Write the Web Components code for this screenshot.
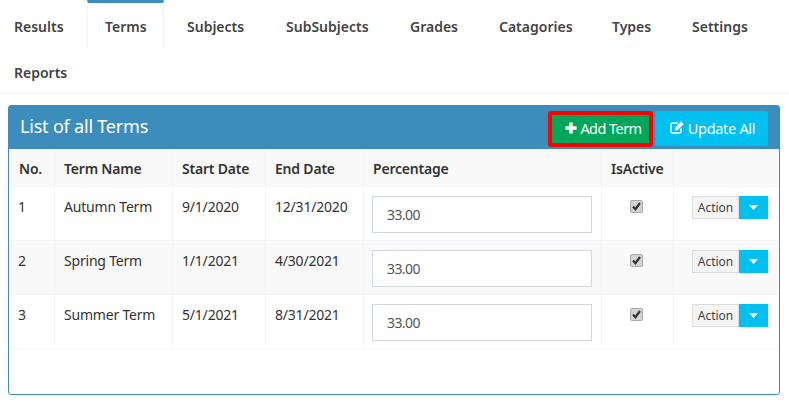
<!DOCTYPE html>
<html>
<head>
<meta charset="utf-8">
<style>
  body { margin: 0; background: #fff; font-family: "Noto Sans", "Liberation Sans", sans-serif; color: #333; overflow: hidden; }
</style>
</head>
<body>
<nav-tabs>
  <nav-tab w="87">Results</nav-tab>
  <nav-tab w="77" active>Terms</nav-tab>
  <nav-tab w="99">Subjects</nav-tab>
  <nav-tab w="124">SubSubjects</nav-tab>
  <nav-tab w="89">Grades</nav-tab>
  <nav-tab w="113">Catagories</nav-tab>
  <nav-tab w="80">Types</nav-tab>
  <nav-tab w="97">Settings</nav-tab>
  <nav-tab w="87">Reports</nav-tab>
</nav-tabs>
<terms-panel title="List of all Terms">
  <term-row name="1" term="Autumn Term" start="9/1/2020" end="12/31/2020"></term-row>
  <term-row name="2" term="Spring Term" start="1/1/2021" end="4/30/2021" striped></term-row>
  <term-row name="3" term="Summer Term" start="5/1/2021" end="8/31/2021"></term-row>
</terms-panel>
<script>
const COLS = '46px 118px 93px 98px 238px 72px 1fr';

class NavTabs extends HTMLElement {
  constructor() {
    super();
    this.attachShadow({ mode: 'open' }).innerHTML = `
      <style>
        :host { display: flex; flex-wrap: wrap; height: 93px; border-bottom: 1px solid #f4f4f4; align-content: flex-start; }
      </style>
      <slot></slot>`;
  }
}
customElements.define('nav-tabs', NavTabs);

class NavTab extends HTMLElement {
  constructor() {
    super();
    const active = this.hasAttribute('active');
    this.attachShadow({ mode: 'open' }).innerHTML = `
      <style>
        :host { display: block; box-sizing: border-box; height: 46px; font-size: 14px; font-weight: 600; color: #444;
          padding: 17px 0 0 ${active ? 17 : 14}px; line-height: 20px; white-space: nowrap; }
        :host([active]) { height: 48px; margin: 0 9px -2px 0; border-top: 3px solid #3c8dbc; border-left: 1px solid #f4f4f4; border-right: 1px solid #f4f4f4; padding-top: 14px; }
      </style>
      <slot></slot>`;
    this.style.width = this.getAttribute('w') + 'px';
  }
}
customElements.define('nav-tab', NavTab);

class ToolButton extends HTMLElement {
  constructor() {
    super();
    this.attachShadow({ mode: 'open' }).innerHTML = `
      <style>
        :host { display: flex; align-items: center; justify-content: center; gap: 3px; box-sizing: border-box; height: 35px; padding: 0 0 2px var(--pl);
          background: var(--bg); color: #fff; font-size: 14.5px; border-radius: 3px; letter-spacing: var(--ls); }
        svg { display: block; }
      </style>
      <slot name="icon"></slot><slot></slot>`;
  }
}
customElements.define('tool-button', ToolButton);

class TermsPanel extends HTMLElement {
  constructor() {
    super();
    this.attachShadow({ mode: 'open' }).innerHTML = `
      <style>
        :host { display: block; box-sizing: border-box; margin: 11px 9px 0 8px; height: 290px; border: 1px solid #3c8dbc; border-radius: 3px; }
        header { display: flex; align-items: flex-start; height: 43px; background: #3c8dbc; padding: 5px 11px 0 11px; box-sizing: border-box; }
        h3 { flex: 1; margin: 0; padding-top: 3px; font-size: 18px; font-weight: 400; color: #fff; line-height: 24px; letter-spacing: -0.2px; }
        .tools { display: flex; gap: 2px; }
        .add { width: 105px; height: 36px; border: 4px solid #f00; box-sizing: border-box; border-radius: 3px; display: flex; }
        .add tool-button { flex: 1; height: auto; --bg: #00a65a; --ls: -0.55px; --pl: 6px; border-radius: 0; }
        .upd { width: 113px; --bg: #00c0ef; --ls: -0.3px; --pl: 2px; }
        .head { display: grid; grid-template-columns: ${COLS}; height: 38px; background: #f9f9f9; font-size: 14px; font-weight: 600; color: #333; letter-spacing: -0.2px; border-bottom: 1px solid #f4f4f4; box-sizing: border-box; }
        .head div { padding: 1px 0 0 9px; line-height: 38px; height: 37px; box-sizing: border-box; border-right: 1px solid #f4f4f4; white-space: nowrap; }
        .head div:first-child { padding-left: 10px; }
        .head div:last-child { border-right: 0; }
      </style>
      <header>
        <h3>${this.getAttribute('title')}</h3>
        <div class="tools">
          <div class="add"><tool-button>
            <svg slot="icon" width="12" height="12" viewBox="0 0 12 12"><path d="M4.2 0.4h3.6v3.8h3.8v3.6H7.8v3.8H4.2V7.8H0.4V4.2h3.8z" fill="#fff"/></svg>
            Add Term</tool-button></div>
          <tool-button class="upd">
            <svg slot="icon" width="15" height="13" viewBox="0 0 15 13"><path d="M11 7.5v3A1.6 1.6 0 0 1 9.4 12H2.6A1.6 1.6 0 0 1 1 10.4V3.6A1.6 1.6 0 0 1 2.6 2H8" fill="none" stroke="#fff" stroke-width="1.4"/><path d="M5 6.6L11.2 0.6l2.6 2.5L7.6 9.2 5 9.5z" fill="#fff"/></svg>
            Update All</tool-button>
        </div>
      </header>
      <div class="head"><div>No.</div><div>Term Name</div><div>Start Date</div><div>End Date</div><div>Percentage</div><div>IsActive</div><div></div></div>
      <slot></slot>`;
  }
}
customElements.define('terms-panel', TermsPanel);

class TermRow extends HTMLElement {
  constructor() {
    super();
    const a = n => this.getAttribute(n);
    this.attachShadow({ mode: 'open' }).innerHTML = `
      <style>
        :host { display: grid; grid-template-columns: ${COLS}; height: 54px; box-sizing: border-box; border-bottom: 1px solid #f4f4f4; font-size: 14px; color: #333; letter-spacing: -0.2px; }
        :host([striped]) { background: #f9f9f9; }
        .c { padding: 10px 0 0 9px; line-height: 20px; border-right: 1px solid #f4f4f4; white-space: nowrap; }
        .c:first-child { padding-left: 10px; }
        .c:last-child { border-right: 0; padding: 9px 0 0 18px; }
        .c.wrap { padding: 9px 0 0 8px; }
        .pct { box-sizing: border-box; width: 220px; height: 37px; border: 1px solid #d2d6de; background: #fff; padding: 8px 0 0 14px; font-size: 14px; color: #555; line-height: 20px; letter-spacing: -0.6px; }
        .chk { display: flex; justify-content: center; padding: 13px 3px 0 0; }
        .box { box-sizing: border-box; width: 13px; height: 13px; background: #d4d4d4; border: 1px solid #a8a8a8; border-radius: 2px; display: flex; }
        .act { display: flex; height: 23px; }
        .lbl { box-sizing: border-box; width: 47px; border: 1px solid #ddd; background: #f4f4f4; font-size: 12px; color: #444; line-height: 21px; text-align: center; letter-spacing: 0; }
        .car { width: 29px; background: #00c0ef; display: flex; align-items: center; justify-content: center; }
      </style>
      <div class="c">${a('name')}</div>
      <div class="c">${a('term')}</div>
      <div class="c">${a('start')}</div>
      <div class="c">${a('end')}</div>
      <div class="c wrap"><div class="pct">33.00</div></div>
      <div class="c chk"><div class="box"><svg width="11" height="11" viewBox="0 0 11 11"><path d="M2 5.6l2.4 2.6L9 2" fill="none" stroke="#333" stroke-width="2.2"/></svg></div></div>
      <div class="c"><div class="act"><div class="lbl">Action</div><div class="car"><svg width="9" height="5" viewBox="0 0 9 5"><path d="M0 0h9L4.5 5z" fill="#fff"/></svg></div></div></div>`;
  }
}
customElements.define('term-row', TermRow);
</script>
</body>
</html>
